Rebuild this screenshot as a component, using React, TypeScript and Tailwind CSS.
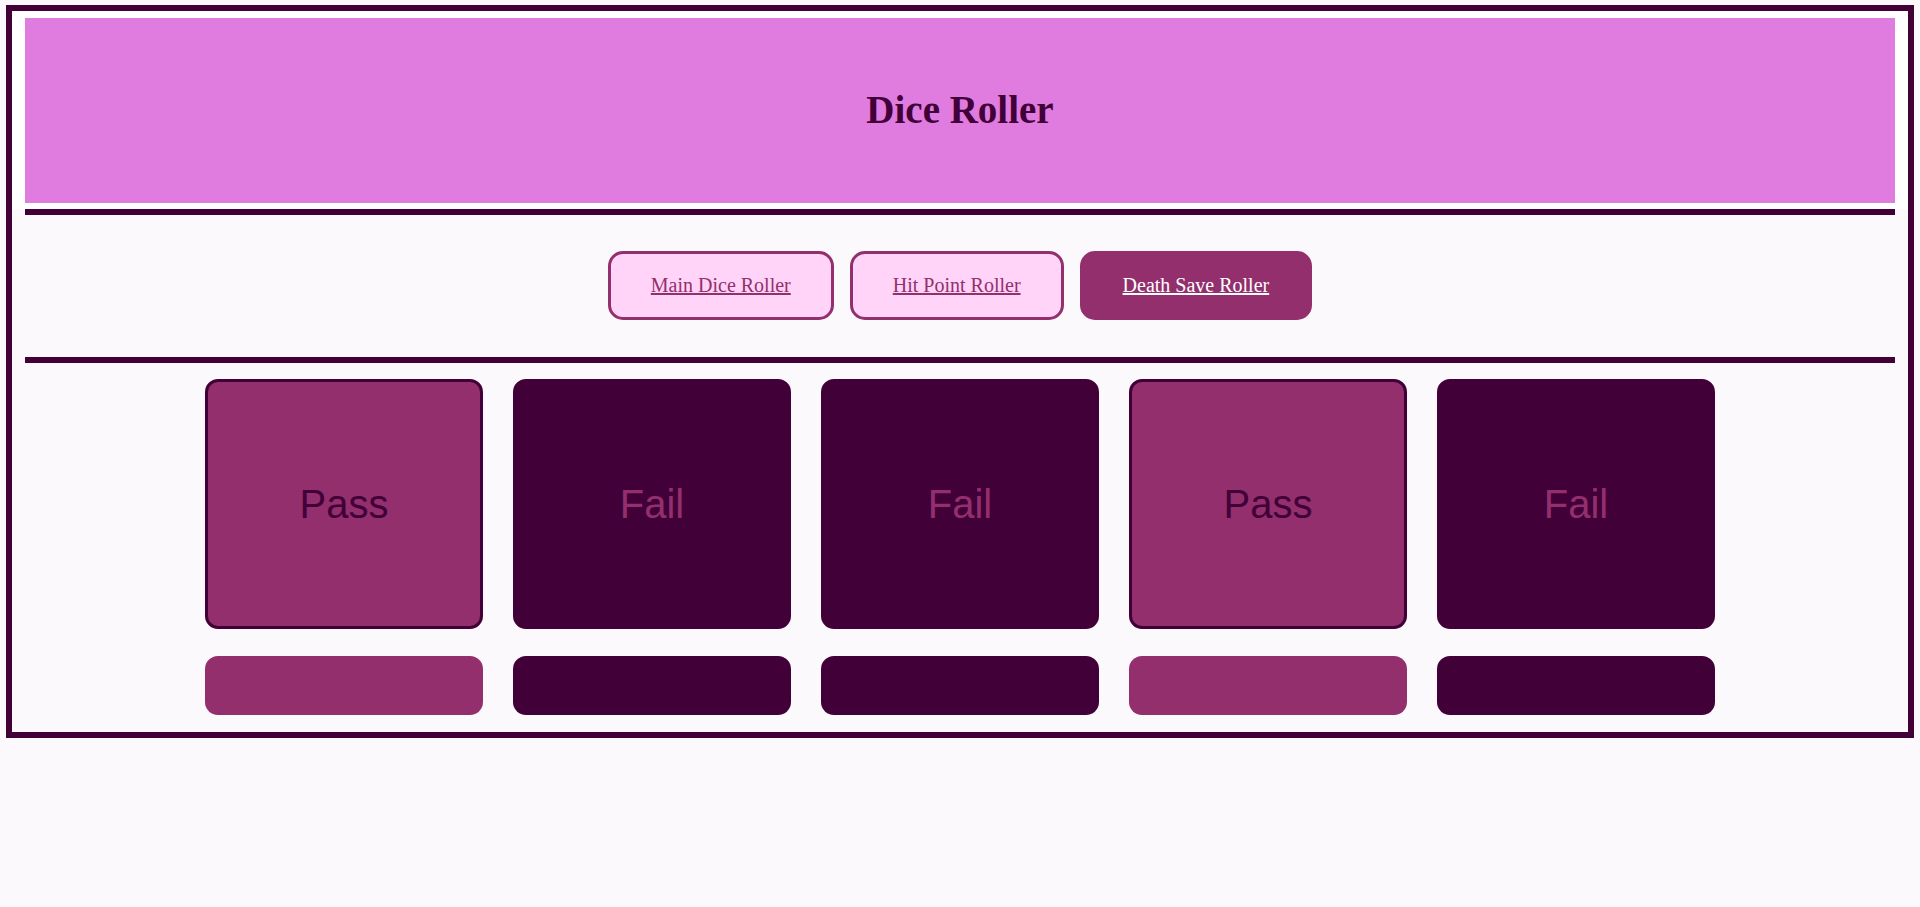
const rolls = ["Pass", "Fail", "Fail", "Pass", "Fail"];

const tabs = [
  { label: "Main Dice Roller", active: false },
  { label: "Hit Point Roller", active: false },
  { label: "Death Save Roller", active: true },
];

function SaveCard({ result }: { result: string }) {
  const pass = result === "Pass";
  return (
    <div className="flex flex-col gap-[27px] w-[278px]">
      <div
        className={
          pass
            ? "h-[250px] rounded-[13px] border-[3px] border-[#420039] bg-[#932f6d] text-[#420039] flex items-center justify-center"
            : "h-[250px] rounded-[13px] border-[3px] border-[#420039] bg-[#420039] text-[#932f6d] flex items-center justify-center"
        }
      >
        <span className="text-[40px] font-['Liberation_Sans',Arial,sans-serif]">{result}</span>
      </div>
      <div className={pass ? "h-[59px] rounded-[13px] bg-[#932f6d]" : "h-[59px] rounded-[13px] bg-[#420039]"} />
    </div>
  );
}

export default function App() {
  return (
    <div className="min-h-[907px] bg-[#fcf9fc] pt-[5px] px-[6px] font-['Liberation_Serif','Times_New_Roman',serif]">
      <div className="border-[6px] border-[#420039] bg-[#fcf9fc]">
        <div className="bg-white px-[13px] pt-[7px] pb-[6px]">
          <header className="h-[185px] bg-[#e07be0] flex items-center justify-center">
            <h1 className="text-[39px] font-bold text-[#420039]">Dice Roller</h1>
          </header>
        </div>
        <div className="mx-[13px] h-[6px] bg-[#420039]" />

        <nav className="flex justify-center gap-4 pt-[36px] pb-[37px]">
          {tabs.map((t) => (
            <a
              key={t.label}
              href="#"
              className={
                t.active
                  ? "block px-10 py-5 rounded-[15px] border-[3px] border-[#932f6d] bg-[#932f6d] text-[20px] leading-[23px] text-white underline"
                  : "block px-10 py-5 rounded-[15px] border-[3px] border-[#932f6d] bg-[#ffd4f8] text-[20px] leading-[23px] text-[#932f6d] underline"
              }
            >
              {t.label}
            </a>
          ))}
        </nav>

        <div className="mx-[13px] h-[6px] bg-[#420039]" />

        <section className="flex justify-center gap-[30px] pt-[16px] pb-[17px]">
          {rolls.map((r, i) => (
            <SaveCard key={i} result={r} />
          ))}
        </section>
      </div>
    </div>
  );
}
